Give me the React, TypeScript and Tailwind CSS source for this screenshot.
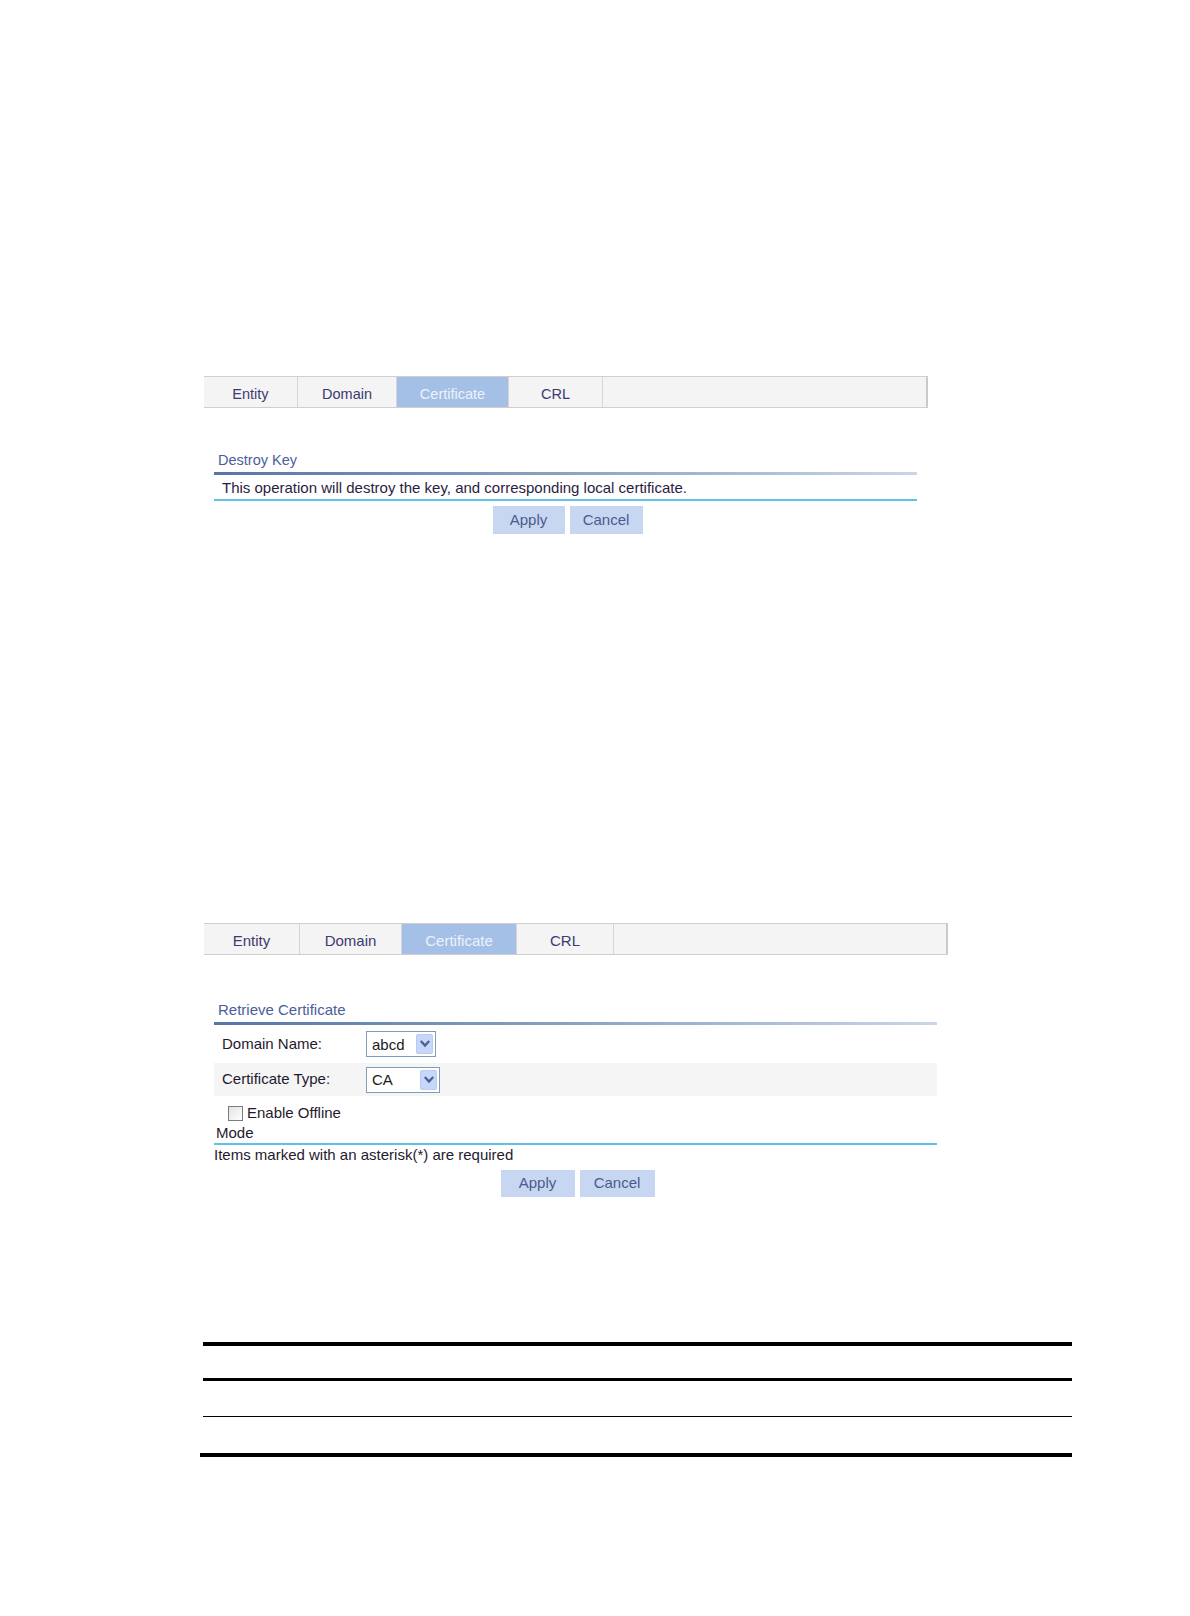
import React from "react";

const font = "font-['Liberation_Sans',Arial,sans-serif]";

type Tab = { label: string; w: string; active?: boolean };

const tabs1: Tab[] = [
  { label: "Entity", w: "w-[94px]" },
  { label: "Domain", w: "w-[99px]" },
  { label: "Certificate", w: "w-[112px]", active: true },
  { label: "CRL", w: "w-[94px]" },
];

const tabs2: Tab[] = [
  { label: "Entity", w: "w-[96px]" },
  { label: "Domain", w: "w-[102px]" },
  { label: "Certificate", w: "w-[115px]", active: true },
  { label: "CRL", w: "w-[97px]" },
];

function TabBar({ tabs, width, size }: { tabs: Tab[]; width: string; size: string }) {
  return (
    <div className={`flex h-[32px] ${width} border-y border-[#cfcfcf] border-r-2 border-r-[#cacaca] bg-[#f4f4f4]`}>
      {tabs.map((t) => (
        <div
          key={t.label}
          className={`flex h-full items-center justify-center border-r border-[#d6d6d6] pt-[5px] ${t.w} ${size} ${
            t.active ? "bg-[#a5c0e6] text-[#edf2fb]" : "text-[#3d3a70]"
          }`}
        >
          {t.label}
        </div>
      ))}
    </div>
  );
}

function Chevron() {
  return (
    <svg width="10" height="8" viewBox="0 0 10 8">
      <path d="M1.5 1.8 L5 5.6 L8.5 1.8" fill="none" stroke="#46608f" strokeWidth="2.2" strokeLinecap="square" />
    </svg>
  );
}

function Select({ value, width }: { value: string; width: string }) {
  return (
    <div className={`flex h-[26px] ${width} items-center border border-[#7f9db9] bg-white pl-[5px]`}>
      <span className="flex-1 text-[15px] leading-none text-[#1b1b1b]">{value}</span>
      <span className="mr-[2px] flex h-[20px] w-[17px] items-center justify-center rounded-[2px] border border-[#b8cbf0] bg-[#c6d7fa]">
        <Chevron />
      </span>
    </div>
  );
}

function Buttons({ w1, w2, h }: { w1: string; w2: string; h: string }) {
  return (
    <div className="flex justify-center gap-[5px] pl-[4px]">
      <div className={`flex ${w1} ${h} items-center justify-center bg-[#c7d7f1] text-[15px] text-[#4b5b8c]`}>Apply</div>
      <div className={`flex ${w2} ${h} items-center justify-center bg-[#c7d7f1] text-[15px] text-[#4b5b8c]`}>Cancel</div>
    </div>
  );
}

export default function App() {
  return (
    <div className={`min-h-[1616px] w-full bg-white pl-[200px] pt-[376px] ${font}`}>
      {/* Section 1: Destroy Key */}
      <div className="ml-[4px] w-[724px]">
        <TabBar tabs={tabs1} width="w-[724px]" size="text-[14.5px]" />
        <div className="ml-[10px] mr-[11px] mt-[41px]">
          <div className="h-[23px] pl-[4px] text-[14.5px] leading-[22px] text-[#4a5e9c]">Destroy Key</div>
          <div className="h-[3px] bg-gradient-to-r from-[#5676a6] via-[#8aa3c4] to-[#cad6e5]" />
          <div className="h-[24px] pl-[8px] pt-[1px] text-[15px] leading-[23px] text-[#2a1d3f]">
            This operation will destroy the key, and corresponding local certificate.
          </div>
          <div className="h-[2px] bg-[#62c0e6]" />
          <div className="mt-[5px]">
            <Buttons w1="w-[72px]" w2="w-[73px]" h="h-[28px]" />
          </div>
        </div>
      </div>

      {/* Section 2: Retrieve Certificate */}
      <div className="ml-[4px] mt-[389px] w-[744px]">
        <TabBar tabs={tabs2} width="w-[744px]" size="text-[15px]" />
        <div className="ml-[10px] mr-[11px] mt-[44px]">
          <div className="h-[23px] pl-[4px] text-[15px] leading-[22px] text-[#4a5e9c]">Retrieve Certificate</div>
          <div className="h-[3px] bg-gradient-to-r from-[#5676a6] via-[#8aa3c4] to-[#cad6e5]" />
          <div className="flex h-[38px] items-center">
            <div className="w-[152px] pl-[8px] text-[15px] text-[#1f1a2e]">Domain Name:</div>
            <Select value="abcd" width="w-[70px]" />
          </div>
          <div className="flex h-[33px] items-center bg-[#f5f5f5]">
            <div className="w-[152px] pl-[8px] text-[15px] text-[#1f1a2e]">Certificate Type:</div>
            <Select value="CA" width="w-[74px]" />
          </div>
          <div className="mt-[7px] text-[15px] leading-[20px] text-[#1f1a2e]">
            <div className="flex h-[20px] items-center pl-[14px]">
              <span className="mr-[4px] inline-block h-[15px] w-[15px] border border-[#7c7c7c] bg-gradient-to-br from-[#e2e2e2] to-white" />
              <span>Enable Offline</span>
            </div>
            <div className="h-[20px] pl-[2px]">Mode</div>
          </div>
          <div className="h-[2px] bg-[#62c0e6]" />
          <div className="h-[19px] text-[15px] leading-[19px] text-[#1f1a2e]">Items marked with an asterisk(*) are required</div>
          <div className="mt-[6px]">
            <Buttons w1="w-[74px]" w2="w-[75px]" h="h-[27px]" />
          </div>
        </div>
      </div>

      {/* Section 3: table rules */}
      <div className="mt-[145px] w-[872px]">
        <div className="ml-[3px] h-[4px] bg-black" />
        <div className="ml-[3px] h-[32px]" />
        <div className="ml-[3px] h-[3px] bg-black" />
        <div className="ml-[3px] h-[35px]" />
        <div className="ml-[3px] h-[1px] bg-black" />
        <div className="ml-[3px] h-[36px]" />
        <div className="h-[4px] bg-black" />
      </div>
    </div>
  );
}
